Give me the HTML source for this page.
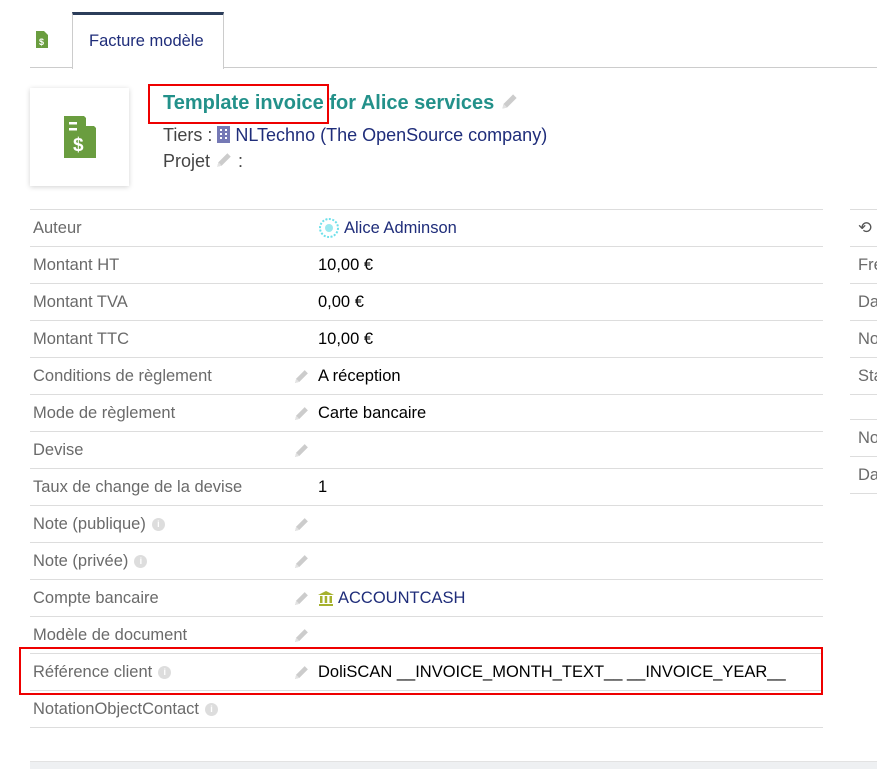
<!DOCTYPE html>
<html><head><meta charset="utf-8"><style>
body{margin:0;width:877px;height:768px;background:#fff;font-family:"Liberation Sans",sans-serif;font-size:16.5px;position:relative;overflow:hidden}
.a{position:absolute}
.row{position:absolute;left:30px;width:793px;height:36px;border-top:1px solid #ddd}
.row .l{position:absolute;left:3px;top:0;line-height:36px;color:#6a6a6a;display:flex;align-items:center;height:36px}
.row .v{position:absolute;left:288px;top:0;height:36px;color:#000;display:flex;align-items:center;white-space:nowrap}
.row .v.e{left:263px}
.pen{display:inline-block;width:17px;height:17px;margin-right:8px}
.info{display:inline-block;width:13px;height:13px;border-radius:50%;background:#ddd;color:#fff;font-size:9px;line-height:13px;text-align:center;font-weight:bold;margin-left:6px}
.rr{position:absolute;left:850px;width:30px;height:36px;border-top:1px solid #ddd;color:#6a6a6a}
.rr span{position:absolute;left:8px;top:0;line-height:36px}
a{color:#1f2d7a;text-decoration:none}
</style></head><body>
<svg width="0" height="0" style="position:absolute"><defs><symbol id="p" viewBox="0 0 16 16"><path d="M2 14l1-4 8-8 3 3-8 8z" fill="#ccc"/><path d="M2 14l1-4 3 3z" fill="#e2e2e2"/></symbol></defs></svg>
<svg class="a" style="left:36px;top:31px" width="12" height="17" viewBox="0 0 12 17"><path d="M0 0h8l4 4v13H0z" fill="#6a9d3f"/><text x="3" y="14" font-size="9" fill="#fff" font-family="Liberation Sans" font-weight="bold">$</text></svg>
<div class="a" style="left:72px;top:12px;width:150px;height:54px;border:1px solid #ccc;border-bottom:none;border-top:3px solid #2b3d5a;background:#fff;z-index:2"></div>
<div class="a" style="left:89px;top:32px;color:#1f2d7a;z-index:3">Facture modèle</div>
<div class="a" style="left:30px;top:67px;width:847px;border-top:1px solid #ccc"></div>
<div class="a" style="left:30px;top:88px;width:99px;height:98px;background:#fff;box-shadow:0 1px 5px rgba(0,0,0,.18)"></div>
<svg class="a" style="left:64px;top:116px" width="32" height="42" viewBox="0 0 32 42"><path d="M0 0h20l12 12v30H0z" fill="#6a9d3f"/><path d="M22 0l10 10H22z" fill="#fff"/><rect x="5" y="6" width="8" height="2.5" fill="#fff"/><rect x="5" y="12" width="8" height="2.5" fill="#fff"/><text x="9" y="35" font-size="19" fill="#fff" font-family="Liberation Sans" font-weight="bold">$</text></svg>
<div class="a" style="left:163px;top:92px;font-size:20px;font-weight:bold;color:#23918a;white-space:nowrap">Template invoice for Alice services <svg class="pen" style="width:19px;height:19px;vertical-align:-2px"><use href="#p"/></svg></div>
<div class="a" style="left:148px;top:84px;width:177px;height:36px;border:2px solid #e00"></div>
<div class="a" style="left:163px;top:125px;font-size:18px;color:#444;white-space:nowrap">Tiers : <svg width="13" height="17" style="vertical-align:-2px"><rect width="13" height="17" fill="#7579b5"/><g fill="#fff"><rect x="3" y="3" width="2" height="2"/><rect x="8" y="3" width="2" height="2"/><rect x="3" y="7" width="2" height="2"/><rect x="8" y="7" width="2" height="2"/><rect x="3" y="11" width="2" height="2"/><rect x="8" y="11" width="2" height="2"/></g></svg> <a>NLTechno (The OpenSource company)</a></div>
<div class="a" style="left:163px;top:151px;font-size:18px;color:#444">Projet <svg style="width:18px;height:18px;vertical-align:-2px"><use href="#p"/></svg> :</div>
<div class="row" style="top:209px"><span class="l">Auteur</span><span class="v"><svg width="22" height="20" style="margin-right:4px"><circle cx="11" cy="10" r="9" fill="none" stroke="#6ee0ea" stroke-width="2" stroke-dasharray="2 1.5"/><circle cx="11" cy="10" r="4" fill="#9ae8ef"/></svg><a>Alice Adminson</a></span></div>
<div class="row" style="top:246px"><span class="l">Montant HT</span><span class="v">10,00 €</span></div>
<div class="row" style="top:283px"><span class="l">Montant TVA</span><span class="v">0,00 €</span></div>
<div class="row" style="top:320px"><span class="l">Montant TTC</span><span class="v">10,00 €</span></div>
<div class="row" style="top:357px"><span class="l">Conditions de règlement</span><span class="v e"><svg class="pen"><use href="#p"/></svg>A réception</span></div>
<div class="row" style="top:394px"><span class="l">Mode de règlement</span><span class="v e"><svg class="pen"><use href="#p"/></svg>Carte bancaire</span></div>
<div class="row" style="top:431px"><span class="l">Devise</span><span class="v e"><svg class="pen"><use href="#p"/></svg></span></div>
<div class="row" style="top:468px"><span class="l">Taux de change de la devise</span><span class="v">1</span></div>
<div class="row" style="top:505px"><span class="l">Note (publique)<span class="info">i</span></span><span class="v e"><svg class="pen"><use href="#p"/></svg></span></div>
<div class="row" style="top:542px"><span class="l">Note (privée)<span class="info">i</span></span><span class="v e"><svg class="pen"><use href="#p"/></svg></span></div>
<div class="row" style="top:579px"><span class="l">Compte bancaire</span><span class="v e"><svg class="pen"><use href="#p"/></svg><svg width="16" height="15" style="margin-right:4px"><path d="M0 4L8 0l8 4z M1 13h14v2H1z" fill="#a5b12d"/><rect x="2" y="5" width="2.5" height="7" fill="#a5b12d"/><rect x="6.7" y="5" width="2.5" height="7" fill="#a5b12d"/><rect x="11.5" y="5" width="2.5" height="7" fill="#a5b12d"/></svg><a>ACCOUNTCASH</a></span></div>
<div class="row" style="top:616px"><span class="l">Modèle de document</span><span class="v e"><svg class="pen"><use href="#p"/></svg></span></div>
<div class="row" style="top:653px"><span class="l">Référence client<span class="info">i</span></span><span class="v e"><svg class="pen"><use href="#p"/></svg>DoliSCAN __INVOICE_MONTH_TEXT__ __INVOICE_YEAR__</span></div>
<div class="row" style="top:690px;height:36px;border-bottom:1px solid #ddd"><span class="l">NotationObjectContact<span class="info">i</span></span></div>
<div class="a" style="left:19px;top:647px;width:800px;height:44px;border:2px solid #e00"></div>
<div class="rr" style="top:209px"><span style="color:#555">⟲</span></div>
<div class="rr" style="top:246px"><span>Fre</span></div>
<div class="rr" style="top:283px"><span>Da</span></div>
<div class="rr" style="top:320px"><span>No</span></div>
<div class="rr" style="top:357px"><span>Sta</span></div>
<div class="rr" style="top:394px"></div>
<div class="rr" style="top:419px"><span>No</span></div>
<div class="rr" style="top:456px"><span>Da</span></div>
<div class="a" style="left:850px;top:493px;width:30px;border-top:1px solid #ddd"></div>
<div class="a" style="left:30px;top:761px;width:847px;height:7px;background:#eef0f2;border-top:1px solid #e2e2e2"></div>
</body></html>
